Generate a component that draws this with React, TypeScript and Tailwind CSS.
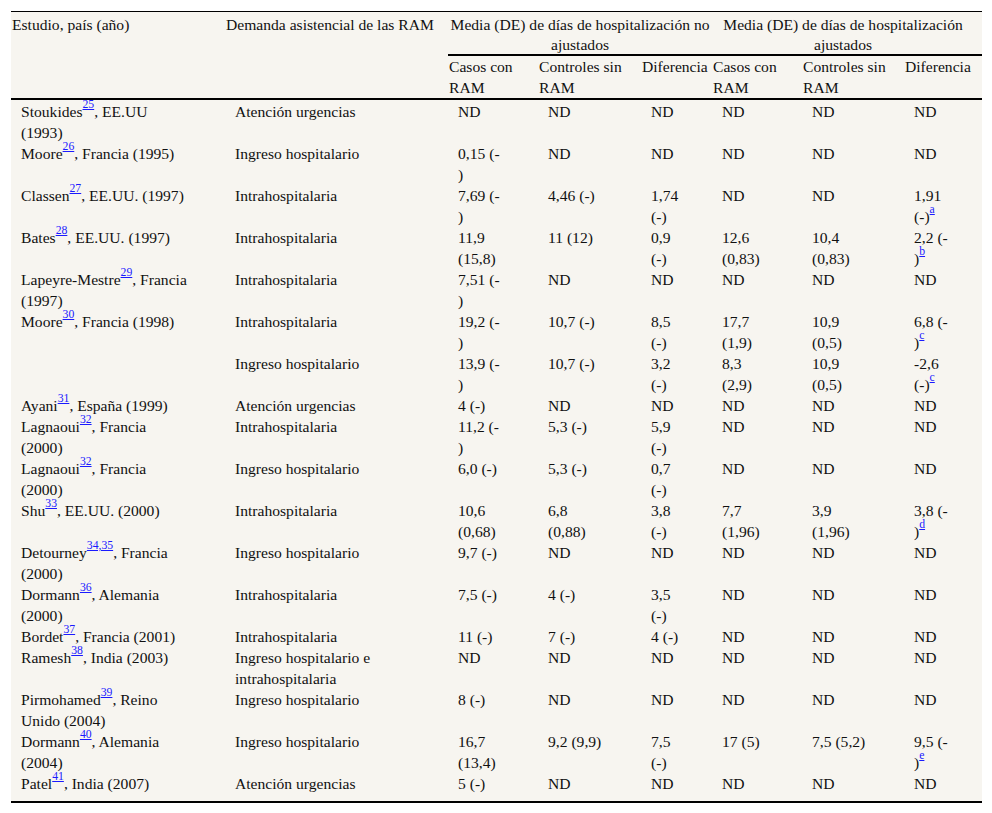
import React from "react";

// cell syntax: "|" = line break, "{x}" = superscript link
const rows: string[][] = [
  ["Stoukides{25}, EE.UU|(1993)", "Atención urgencias", "ND", "ND", "ND", "ND", "ND", "ND"],
  ["Moore{26}, Francia (1995)", "Ingreso hospitalario", "0,15 (-|)", "ND", "ND", "ND", "ND", "ND"],
  ["Classen{27}, EE.UU. (1997)", "Intrahospitalaria", "7,69 (-|)", "4,46 (-)", "1,74|(-)", "ND", "ND", "1,91|(-){a}"],
  ["Bates{28}, EE.UU. (1997)", "Intrahospitalaria", "11,9|(15,8)", "11 (12)", "0,9|(-)", "12,6|(0,83)", "10,4|(0,83)", "2,2 (-|){b}"],
  ["Lapeyre-Mestre{29}, Francia|(1997)", "Intrahospitalaria", "7,51 (-|)", "ND", "ND", "ND", "ND", "ND"],
  ["Moore{30}, Francia (1998)", "Intrahospitalaria", "19,2 (-|)", "10,7 (-)", "8,5|(-)", "17,7|(1,9)", "10,9|(0,5)", "6,8 (-|){c}"],
  ["", "Ingreso hospitalario", "13,9 (-|)", "10,7 (-)", "3,2|(-)", "8,3|(2,9)", "10,9|(0,5)", "-2,6|(-){c}"],
  ["Ayani{31}, España (1999)", "Atención urgencias", "4 (-)", "ND", "ND", "ND", "ND", "ND"],
  ["Lagnaoui{32}, Francia|(2000)", "Intrahospitalaria", "11,2 (-|)", "5,3 (-)", "5,9|(-)", "ND", "ND", "ND"],
  ["Lagnaoui{32}, Francia|(2000)", "Ingreso hospitalario", "6,0 (-)", "5,3 (-)", "0,7|(-)", "ND", "ND", "ND"],
  ["Shu{33}, EE.UU. (2000)", "Intrahospitalaria", "10,6|(0,68)", "6,8|(0,88)", "3,8|(-)", "7,7|(1,96)", "3,9|(1,96)", "3,8 (-|){d}"],
  ["Detourney{34,35}, Francia|(2000)", "Ingreso hospitalario", "9,7 (-)", "ND", "ND", "ND", "ND", "ND"],
  ["Dormann{36}, Alemania|(2000)", "Intrahospitalaria", "7,5 (-)", "4 (-)", "3,5|(-)", "ND", "ND", "ND"],
  ["Bordet{37}, Francia (2001)", "Intrahospitalaria", "11 (-)", "7 (-)", "4 (-)", "ND", "ND", "ND"],
  ["Ramesh{38}, India (2003)", "Ingreso hospitalario e|intrahospitalaria", "ND", "ND", "ND", "ND", "ND", "ND"],
  ["Pirmohamed{39}, Reino|Unido (2004)", "Ingreso hospitalario", "8 (-)", "ND", "ND", "ND", "ND", "ND"],
  ["Dormann{40}, Alemania|(2004)", "Ingreso hospitalario", "16,7|(13,4)", "9,2 (9,9)", "7,5|(-)", "17 (5)", "7,5 (5,2)", "9,5 (-|){e}"],
  ["Patel{41}, India (2007)", "Atención urgencias", "5 (-)", "ND", "ND", "ND", "ND", "ND"],
];

const serif = "font-['Liberation_Serif',serif] text-[15.6px] leading-[21px] text-[#111]";
const head1 = "font-['Liberation_Serif',serif] text-[15.6px] leading-[19.5px] text-[#111] pt-[3px]";

function Line({ text }: { text: string }) {
  const parts = text.split(/(\{[^}]+\})/).filter(Boolean);
  return (
    <>
      {parts.map((p, i) =>
        p.startsWith("{") ? (
          <sup key={i} className="top-[-0.8em]">
            <a href="#" className="text-[#1a1aff] underline">
              {p.slice(1, -1)}
            </a>
          </sup>
        ) : (
          <span key={i}>{p}</span>
        )
      )}
    </>
  );
}

function Cell({ text, first, last }: { text: string; first: boolean; last: boolean }) {
  const lines = text.split("|");
  return (
    <td
      className={
        serif +
        " align-top pl-[10px] whitespace-nowrap " +
        (first ? "pt-px " : "") +
        (last ? "pb-[7px]" : "")
      }
    >
      {lines.map((l, i) => (
        <React.Fragment key={i}>
          {i > 0 && <br />}
          <Line text={l} />
        </React.Fragment>
      ))}
    </td>
  );
}

export default function App() {
  return (
    <div className="min-h-screen bg-white pt-[11px] pl-[11px]">
      <table className={serif + " table-fixed border-collapse w-[971px] bg-[#f7f5f0] border-t border-b-2 border-black"}>
        <colgroup>
          <col className="w-[214px]" />
          <col className="w-[223px]" />
          <col className="w-[90px]" />
          <col className="w-[103px]" />
          <col className="w-[71px]" />
          <col className="w-[90px]" />
          <col className="w-[102px]" />
          <col className="w-[78px]" />
        </colgroup>
        <thead>
          <tr>
            <th rowSpan={2} className={head1 + " align-top text-left font-normal pl-px border-b-2 border-black"}>
              Estudio, país (año)
            </th>
            <th rowSpan={2} className={head1 + " align-top text-left font-normal pl-px border-b-2 border-black"}>
              Demanda asistencial de las RAM
            </th>
            <th colSpan={3} className={head1 + " align-top text-center font-normal whitespace-nowrap border-b-2 border-black"}>
              Media (DE) de días de hospitalización no
              <br />
              ajustados
            </th>
            <th
              colSpan={3}
              className={head1 + " align-top text-center font-normal pr-[8px] whitespace-nowrap border-b-2 border-black"}
            >
              Media (DE) de días de hospitalización
              <br />
              ajustados
            </th>
          </tr>
          <tr>
            {["Casos con|RAM", "Controles sin|RAM", "Diferencia", "Casos con|RAM", "Controles sin|RAM", "Diferencia"].map(
              (h, i) => (
                <th
                  key={i}
                  className={serif + " align-top text-left font-normal pl-px border-b-2 border-black whitespace-nowrap"}
                >
                  {h.split("|").map((l, j) => (
                    <React.Fragment key={j}>
                      {j > 0 && <br />}
                      {l}
                    </React.Fragment>
                  ))}
                </th>
              )
            )}
          </tr>
        </thead>
        <tbody>
          {rows.map((r, i) => (
            <tr key={i}>
              {r.map((c, j) => (
                <Cell key={j} text={c} first={i === 0} last={i === rows.length - 1} />
              ))}
            </tr>
          ))}
        </tbody>
      </table>
    </div>
  );
}
